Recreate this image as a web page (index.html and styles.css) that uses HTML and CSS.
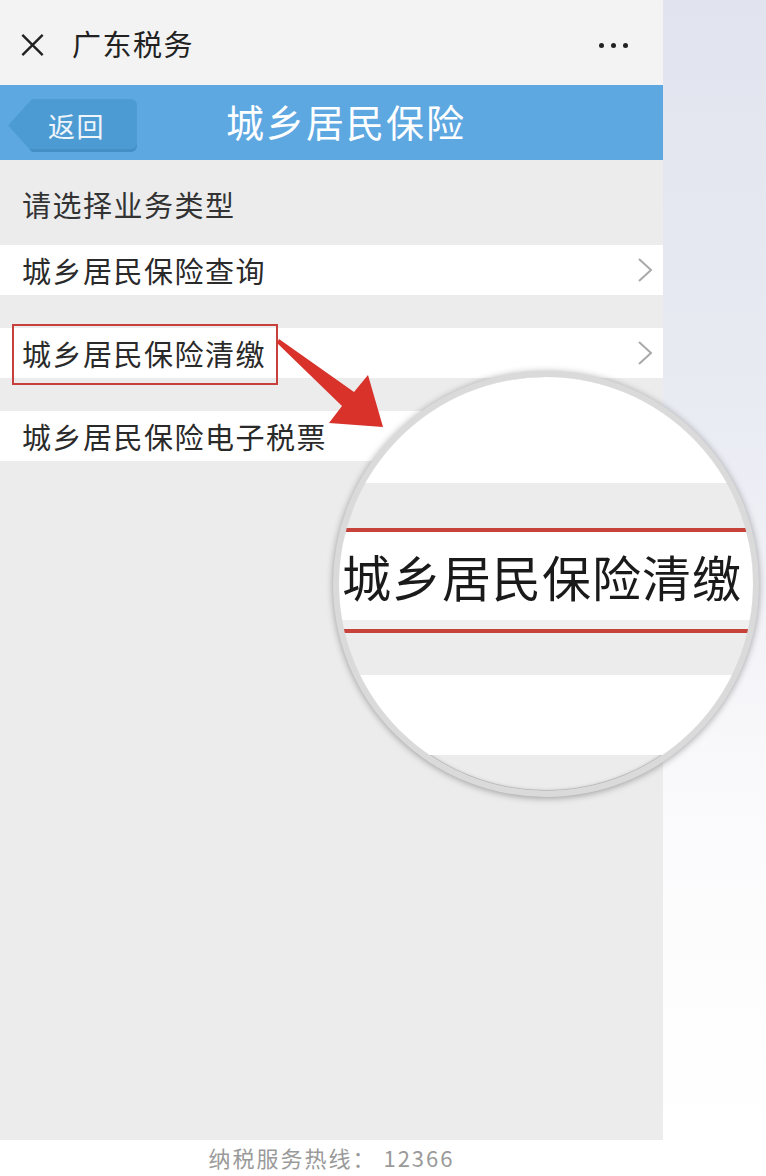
FILE: index.html
```html
<!DOCTYPE html>
<html>
<head>
  <meta charset="utf-8">
  <title>城乡居民保险</title>
  <link rel="stylesheet" href="styles.css">
</head>
<body>
  <div class="screen">
    <div class="phone">
      <div class="topbar">
        <svg class="close" width="26" height="26" viewBox="0 0 26 26">
          <path d="M2 2 L24 24 M24 2 L2 24" />
        </svg>
        <span class="app-name">广东税务</span>
        <span class="more"><i></i><i></i><i></i></span>
      </div>
      <div class="header">
        <div class="back">返回</div>
        <div class="title">城乡居民保险</div>
      </div>
      <div class="prompt">请选择业务类型</div>
      <ul class="menu">
        <li class="item">
          <span>城乡居民保险查询</span>
          <svg class="chevron" width="16" height="24" viewBox="0 0 16 24"><path d="M2 1 L14 12 L2 23" /></svg>
        </li>
        <li class="item">
          <span>城乡居民保险清缴</span>
          <svg class="chevron" width="16" height="24" viewBox="0 0 16 24"><path d="M2 1 L14 12 L2 23" /></svg>
          <div class="mark"></div>
        </li>
        <li class="item">
          <span>城乡居民保险电子税票</span>
          <svg class="chevron" width="16" height="24" viewBox="0 0 16 24"><path d="M2 1 L14 12 L2 23" /></svg>
        </li>
      </ul>
    </div>
    <div class="side"></div>

    <!-- annotation: arrow + magnifier -->
    <svg class="arrow" width="766" height="500" viewBox="0 0 766 500">
      <polygon points="279,339 354,392 368,375 383,427 329,423 342,406 277,343" />
    </svg>
    <div class="lens">
      <div class="band white" style="height:106px"></div>
      <div class="band gray" style="height:45px"></div>
      <div class="band red"></div>
      <div class="band zoomed">城乡居民保险清缴</div>
      <div class="band faint" style="height:9px"></div>
      <div class="band red"></div>
      <div class="band gray" style="height:42px"></div>
      <div class="band white" style="height:80px"></div>
    </div>
  </div>
  <div class="footer">纳税服务热线： 12366</div>
</body>
</html>
```

FILE: styles.css
```css
body {
  margin: 0;
  font-family: "Noto Sans CJK SC", "Noto Sans", sans-serif;
  background: #fff;
}
.screen {
  position: relative;
  display: flex;
  height: 1140px;
}
.phone {
  width: 663px;
  background: #ececec;
}
.side {
  flex: 1;
  background: linear-gradient(to bottom, #e1e3ee 0%, #e9ebf3 35%, #f8f7fa 65%, #fdfcfd 80%, #ffffff 100%);
}

/* top bar */
.topbar {
  height: 85px;
  background: #f3f3f3;
  display: flex;
  align-items: center;
  padding: 5px 35px 0 20px;
  box-sizing: border-box;
}
.close {
  stroke: #222;
  stroke-width: 2.6;
  fill: none;
  width: 25px;
  height: 24px;
}
.app-name {
  margin-left: 27px;
  font-size: 29px;
  letter-spacing: 1.5px;
  color: #222;
  flex: 1;
  margin-top: -4px;
}
.more {
  display: flex;
  gap: 7px;
}
.more i {
  width: 5px;
  height: 5px;
  border-radius: 50%;
  background: #222;
}

/* blue header */
.header {
  height: 75px;
  background: #5ea8e2;
  display: flex;
  align-items: flex-start;
  padding: 14px 0 0 8px;
  box-sizing: border-box;
}
.back {
  width: 129px;
  height: 53px;
  background: #4c9bd3;
  border-radius: 6px;
  clip-path: polygon(24px 0, 100% 0, 100% 100%, 24px 100%, 0 50%);
  box-shadow: inset 0 -3px 0 rgba(30, 90, 140, 0.18);
  color: #eef5fb;
  font-size: 27px;
  letter-spacing: 1.5px;
  line-height: 53px;
  padding-left: 40px;
  box-sizing: border-box;
}
.title {
  margin-left: 89px;
  color: #fff;
  font-size: 38px;
  letter-spacing: 2px;
  line-height: 50px;
  margin-top: -3px;
}

/* list */
.prompt {
  height: 85px;
  display: flex;
  align-items: center;
  padding: 2px 0 0 22px;
  box-sizing: border-box;
  font-size: 29px;
  letter-spacing: 1.5px;
  color: #333;
}
.menu {
  list-style: none;
  margin: 0;
  padding: 0;
  display: flex;
  flex-direction: column;
  gap: 33px;
}
.item {
  position: relative;
  height: 50px;
  background: #fff;
  display: flex;
  align-items: center;
  justify-content: space-between;
  padding: 0 10px 0 22px;
  font-size: 29px;
  letter-spacing: 1.5px;
  color: #2a2a2a;
}
.chevron {
  stroke: #a9a9a9;
  stroke-width: 2;
  fill: none;
}
.mark {
  position: absolute;
  left: 12px;
  top: -4px;
  width: 266px;
  height: 61px;
  border: 2px solid #c8403b;
  box-sizing: border-box;
}

/* annotation */
.arrow {
  position: absolute;
  left: 0;
  top: 0;
}
.arrow polygon {
  fill: #d8322b;
}
.lens {
  position: absolute;
  left: 333px;
  top: 371px;
  width: 426px;
  height: 426px;
  box-sizing: border-box;
  border-radius: 50%;
  border: 6px solid #dadada;
  box-shadow: 0 1px 7px rgba(0, 0, 0, 0.35), inset 0 0 0 1px #bcbcbc, inset 0 0 4px rgba(0, 0, 0, 0.2);
  background: #ececec;
  overflow: hidden;
  display: flex;
  flex-direction: column;
}
.band {
  flex-shrink: 0;
}
.band.white {
  background: #fff;
}
.band.gray {
  background: #ececec;
}
.band.faint {
  background: #f0f0f0;
}
.band.red {
  height: 4px;
  background: #c8423c;
}
.band.zoomed {
  height: 88px;
  background: #fff;
  font-size: 49px;
  letter-spacing: 1px;
  line-height: 88px;
  color: #1a1a1a;
  padding-left: 3px;
  white-space: nowrap;
}

.footer {
  width: 663px;
  height: 36px;
  line-height: 34px;
  text-align: center;
  font-size: 22px;
  letter-spacing: 2px;
  color: #9a9a9a;
}
```
